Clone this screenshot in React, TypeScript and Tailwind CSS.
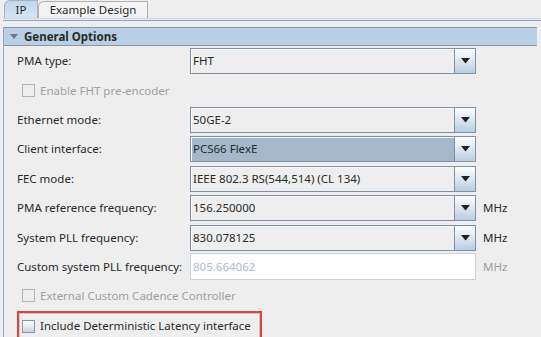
import React from 'react';

const Arrow: React.FC = () => (
    <svg width="9" height="6" viewBox="0 0 9 6">
        <polygon points="0,0 9,0 4.5,5.5" fill="#222" />
    </svg>
);

const Combo: React.FC<{ value: string, selected?: boolean }> = ({ value, selected }) => (
    <div className="flex h-[26px] w-[286px]">
        <div className={`flex-1 flex items-center pl-[2px] border border-[#7f91a4] shadow-[inset_1px_1px_0_#fafafa] text-[#2a2a2a] ${selected ? 'bg-[#a4b8cc]' : 'bg-[#eeeeee]'}`}>
            {value}
        </div>
        <div className="w-[21px] flex items-center justify-center border border-l-0 border-[#7f91a4] bg-gradient-to-b from-[#ffffff] to-[#b9cde1]">
            <Arrow />
        </div>
    </div>
);

const Row: React.FC<{ label: string, children: React.ReactNode, unit?: string, unitDim?: boolean, className?: string }> = ({ label, children, unit, unitDim, className }) => (
    <div className={`flex items-center ${className || ''}`}>
        <div className="w-[186px] pl-[13px] whitespace-nowrap text-[#2a2a2a]">{label}</div>
        {children}
        {unit && <div className={`ml-[7px] ${unitDim ? 'text-[#a0a0a0]' : 'text-[#2a2a2a]'}`}>{unit}</div>}
    </div>
);

const CheckRow: React.FC<{ label: string, disabled?: boolean, className?: string }> = ({ label, disabled, className }) => (
    <div className={`flex items-center pl-[18px] ${className || ''}`}>
        <div className={`w-[13px] h-[13px] border ${disabled ? 'border-[#b4b4b4] bg-[#eeeeee]' : 'border-[#8796a8] bg-gradient-to-b from-[#ffffff] to-[#c6d6e6]'}`} />
        <div className={`ml-[5px] ${disabled ? 'text-[#a0a0a0]' : 'text-[#2a2a2a]'}`}>{label}</div>
    </div>
);

export default function App() {
    return (
        <div className="w-[541px] h-[337px] bg-[#eeeeee] overflow-hidden text-[11.5px] leading-none" style={{ fontFamily: '"Noto Sans", sans-serif' }}>
            {/* tabs */}
            <div className="flex items-end h-[18px] pl-[4px]">
                <div className="h-[18px] w-[34px] flex items-center justify-center rounded-tl-[6px] border border-b-0 border-[#9fb3cb] bg-gradient-to-b from-[#c3d6ea] to-[#d6e4f1] text-[#2a2a2a]">IP</div>
                <div className="h-[17px] w-[110px] flex items-center justify-center rounded-tl-[6px] border border-b-0 border-l-[#b0b0b0] border-t-[#b0b0b0] border-r-[#b0b0b0] bg-[#f3f3f3] text-[#2a2a2a]">Example Design</div>
            </div>
            <div className="h-[1px] bg-[#c6d4e6] ml-[3px]" />
            <div className="h-[1px] bg-[#eeeeee] ml-[3px]" />
            <div className="h-[1px] bg-[#8ea2c8] ml-[3px]" />
            <div className="ml-[3px] w-[534px] border-l border-[#93a7c4] h-[320px]">
                <div className="mt-[6px] h-[19px] border-y border-[#8a949e] bg-[#b9cfe5] flex items-center">
                    <svg width="8" height="6" viewBox="0 0 8 6" className="ml-[6px]">
                        <polygon points="0,0 8,0 4,5" fill="#6b7a8a" />
                    </svg>
                    <span className="ml-[6px] font-bold text-[#2a2a2a]">General Options</span>
                </div>
                <Row label="PMA type:" className="mt-[2px]"><Combo value="FHT" /></Row>
                <CheckRow label="Enable FHT pre-encoder" disabled className="h-[33px]" />
                <Row label="Ethernet mode:"><Combo value="50GE-2" /></Row>
                <Row label="Client interface:" className="mt-[3px]"><Combo value="PCS66 FlexE" selected /></Row>
                <Row label="FEC mode:" className="mt-[4px]"><Combo value="IEEE 802.3 RS(544,514) (CL 134)" /></Row>
                <Row label="PMA reference frequency:" className="mt-[3px]" unit="MHz"><Combo value="156.250000" /></Row>
                <Row label="System PLL frequency:" className="mt-[4px]" unit="MHz"><Combo value="830.078125" /></Row>
                <Row label="Custom system PLL frequency:" className="mt-[2px]" unit="MHz" unitDim>
                    <div className="h-[27px] w-[286px] flex items-center pl-[2px] border border-[#c5d2df] bg-white text-[#a9bed6]">805.664062</div>
                </Row>
                <CheckRow label="External Custom Cadence Controller" disabled className="h-[31px]" />
                <div className="ml-[13px] w-[245px] h-[30px] border-2 border-[#e8403d] shadow-[inset_0_0_0_1px_#c8c8c8] flex items-center pl-[3px]">
                    <div className="w-[13px] h-[13px] border border-[#8796a8] bg-gradient-to-b from-[#ffffff] to-[#c6d6e6]" />
                    <div className="ml-[5px] text-[#2a2a2a]">Include Deterministic Latency interface</div>
                </div>
            </div>
        </div>
    );
}
